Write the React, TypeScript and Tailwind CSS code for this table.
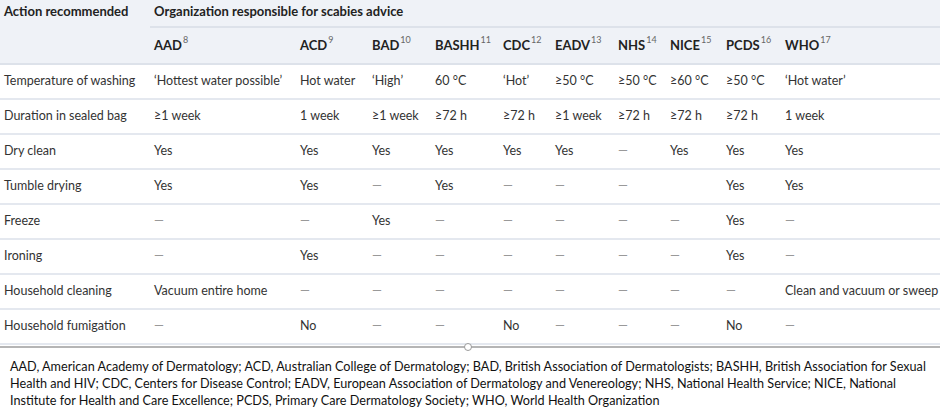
import React from "react";

type Org = { name: string; ref: number };

const orgs: Org[] = [
  { name: "AAD", ref: 8 },
  { name: "ACD", ref: 9 },
  { name: "BAD", ref: 10 },
  { name: "BASHH", ref: 11 },
  { name: "CDC", ref: 12 },
  { name: "EADV", ref: 13 },
  { name: "NHS", ref: 14 },
  { name: "NICE", ref: 15 },
  { name: "PCDS", ref: 16 },
  { name: "WHO", ref: 17 },
];

const D = "—";

const rows: { action: string; values: string[] }[] = [
  {
    action: "Temperature of washing",
    values: ["‘Hottest water possible’", "Hot water", "‘High’", "60 °C", "‘Hot’", "≥50 °C", "≥50 °C", "≥60 °C", "≥50 °C", "‘Hot water’"],
  },
  {
    action: "Duration in sealed bag",
    values: ["≥1 week", "1 week", "≥1 week", "≥72 h", "≥72 h", "≥1 week", "≥72 h", "≥72 h", "≥72 h", "1 week"],
  },
  { action: "Dry clean", values: ["Yes", "Yes", "Yes", "Yes", "Yes", "Yes", D, "Yes", "Yes", "Yes"] },
  { action: "Tumble drying", values: ["Yes", "Yes", D, "Yes", D, D, D, "", "Yes", "Yes"] },
  { action: "Freeze", values: [D, D, "Yes", D, D, D, D, D, "Yes", D] },
  { action: "Ironing", values: [D, "Yes", D, D, D, D, D, D, "Yes", D] },
  {
    action: "Household cleaning",
    values: ["Vacuum entire home", D, D, D, D, D, D, D, D, "Clean and vacuum or sweep"],
  },
  { action: "Household fumigation", values: [D, "No", D, D, "No", D, D, D, "No", D] },
];

const colWidths = [150, 146, 72, 63, 68, 52, 63, 52, 56, 59, 159];

export default function App() {
  return (
    <div className="w-[940px] h-[409px] bg-white overflow-hidden">
      <table className="table-fixed border-collapse w-[940px] font-['Lato',sans-serif] text-[12.5px] text-[#333]">
        <colgroup>
          {colWidths.map((w, i) => (
            <col key={i} style={{ width: w }} />
          ))}
        </colgroup>
        <thead className="bg-[#eff2f7] text-[#222] text-[13px]">
          <tr className="h-[27px]">
            <th rowSpan={2} className="align-top pt-[2px] px-[4px] text-left font-bold whitespace-nowrap">
              Action recommended
            </th>
            <th colSpan={10} className="pb-[3px] px-[4px] text-left font-bold border-b-2 border-[#dde2ea]">
              Organization responsible for scabies advice
            </th>
          </tr>
          <tr className="h-[37px] border-b-2 border-[#dde2ea]">
            {orgs.map((o) => (
              <th key={o.name} className="px-[4px] text-left font-bold whitespace-nowrap">
                {o.name}
                <sup className="font-normal text-[9px] text-[#666] ml-[1px] -top-[7px]">{o.ref}</sup>
              </th>
            ))}
          </tr>
        </thead>
        <tbody>
          {rows.map((r) => (
            <tr key={r.action} className="h-[35px] border-b-2 border-[#e4e8ef]">
              <td className="px-[4px] whitespace-nowrap">{r.action}</td>
              {r.values.map((v, i) => (
                <td
                  key={i}
                  className={`px-[4px] whitespace-nowrap ${v === D ? "text-[#999]" : ""}`}
                >
                  {v}
                </td>
              ))}
            </tr>
          ))}
        </tbody>
      </table>
      <div className="relative h-[2px] bg-[#b5b5b5] mt-[1px]">
        <div className="absolute left-[464px] -top-[3px] w-[8px] h-[8px] rounded-full border border-[#9a9a9a] bg-white" />
      </div>
      <p className="px-[10px] pt-[10px] font-['Lato',sans-serif] text-[12.65px] leading-[17px] text-[#111] whitespace-nowrap">
        AAD, American Academy of Dermatology; ACD, Australian College of Dermatology; BAD, British Association of Dermatologists; BASHH, British Association for Sexual
        <br />
        Health and HIV; CDC, Centers for Disease Control; EADV, European Association of Dermatology and Venereology; NHS, National Health Service; NICE, National
        <br />
        Institute for Health and Care Excellence; PCDS, Primary Care Dermatology Society; WHO, World Health Organization
      </p>
    </div>
  );
}
